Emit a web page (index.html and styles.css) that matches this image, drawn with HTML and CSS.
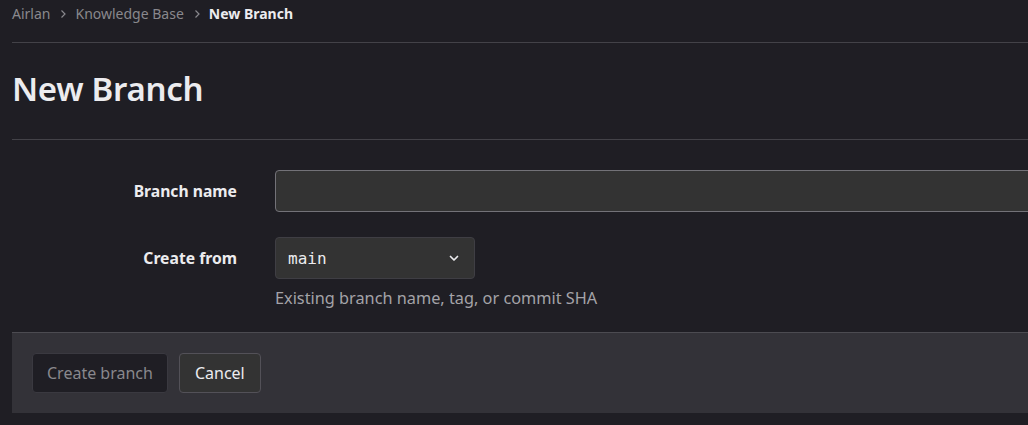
FILE: index.html
```html
<!DOCTYPE html>
<html lang="en">
<head>
<meta charset="utf-8">
<title>New Branch</title>
<link rel="stylesheet" href="styles.css">
</head>
<body>
<div class="page">
  <nav class="breadcrumbs">
    <a class="crumb" href="#">Airlan</a>
    <svg class="sep" width="8" height="10" viewBox="0 0 8 10"><path d="M2.5 1.5 L6 5 L2.5 8.5" fill="none" stroke="#89888d" stroke-width="1.2"/></svg>
    <a class="crumb" href="#">Knowledge Base</a>
    <svg class="sep" width="8" height="10" viewBox="0 0 8 10"><path d="M2.5 1.5 L6 5 L2.5 8.5" fill="none" stroke="#89888d" stroke-width="1.2"/></svg>
    <span class="crumb current">New Branch</span>
  </nav>
  <h1 class="title">New Branch</h1>
  <form class="form">
    <div class="rows">
      <label class="label" for="bn">Branch name</label>
      <div class="field"><input id="bn" class="input" type="text"></div>
      <label class="label" for="cf">Create from</label>
      <div class="field">
        <button type="button" id="cf" class="select">
          <span class="mono">main</span>
          <svg width="14" height="14" viewBox="0 0 14 14"><path d="M3.5 5.5 L7 9 L10.5 5.5" fill="none" stroke="#ececef" stroke-width="1.7" stroke-linecap="round" stroke-linejoin="round"/></svg>
        </button>
        <p class="help">Existing branch name, tag, or commit SHA</p>
      </div>
    </div>
    <div class="actions">
      <button type="button" class="btn btn-disabled">Create branch</button>
      <button type="button" class="btn btn-default">Cancel</button>
    </div>
  </form>
</div>
</body>
</html>
```
FILE: styles.css
```css
html, body {
  margin: 0;
  padding: 0;
  background: #1f1e24;
}
body {
  font-family: "Noto Sans", "Open Sans", sans-serif;
  color: #ececef;
  font-size: 16px;
  overflow: hidden;
}
.page {
  padding: 0 0 0 12px;
}
.breadcrumbs {
  display: flex;
  align-items: center;
  height: 43px;
  box-sizing: border-box;
  padding-bottom: 15px;
  border-bottom: 1px solid #434248;
  font-size: 14px;
}
.crumb {
  color: #89888d;
  text-decoration: none;
}
.crumb.current {
  color: #ececef;
  font-weight: 700;
}
.sep {
  margin: 0 8px 0 9px;
}
.title {
  margin: 0;
  height: 97px;
  display: flex;
  align-items: center;
  font-size: 33px;
  letter-spacing: -0.3px;
  font-weight: 600;
  border-bottom: 1px solid #434248;
  box-sizing: border-box;
  padding-bottom: 6px;
  color: #ececef;
}
.form {
  margin: 0;
  padding-top: 30px;
}
.rows {
  display: grid;
  grid-template-columns: 225px 1fr;
  column-gap: 38px;
  row-gap: 25px;
  align-items: start;
}
.label {
  text-align: right;
  font-weight: 700;
  font-size: 15.7px;
  line-height: 42px;
}
.field {
  min-width: 0;
}
.input {
  display: block;
  height: 42px;
  box-sizing: border-box;
  background: #333333;
  border: 1px solid #737278;
  border-radius: 4px;
  color: #ececef;
  font: inherit;
  padding: 0 12px;
  width: calc(100% + 40px);
}
.select {
  display: flex;
  align-items: center;
  justify-content: space-between;
  width: 200px;
  height: 42px;
  box-sizing: border-box;
  background: #333333;
  border: 1px solid #3f3e44;
  border-radius: 4px;
  padding: 0 13px 0 12px;
  color: #ececef;
  cursor: pointer;
}
.mono {
  font-family: "DejaVu Sans Mono", "Liberation Mono", monospace;
  font-size: 16px;
}
.help {
  margin: 7px 0 0;
  color: #a4a3a8;
  font-size: 16.3px;
  line-height: 24px;
}
.actions {
  margin-top: 22px;
  background: #333238;
  border-top: 1px solid #4c4b51;
  padding: 20px 20px;
  display: flex;
  gap: 11px;
}
.btn {
  height: 40px;
  box-sizing: border-box;
  border-radius: 4px;
  font-family: inherit;
  font-size: 16px;
  padding: 0 14px;
}
.btn-disabled {
  background: #1f1e24;
  border: 1px solid #3a3940;
  color: #89888d;
}
.btn-default {
  background: #333333;
  border: 1px solid #535158;
  color: #ececef;
  padding: 0 15px;
}
```
